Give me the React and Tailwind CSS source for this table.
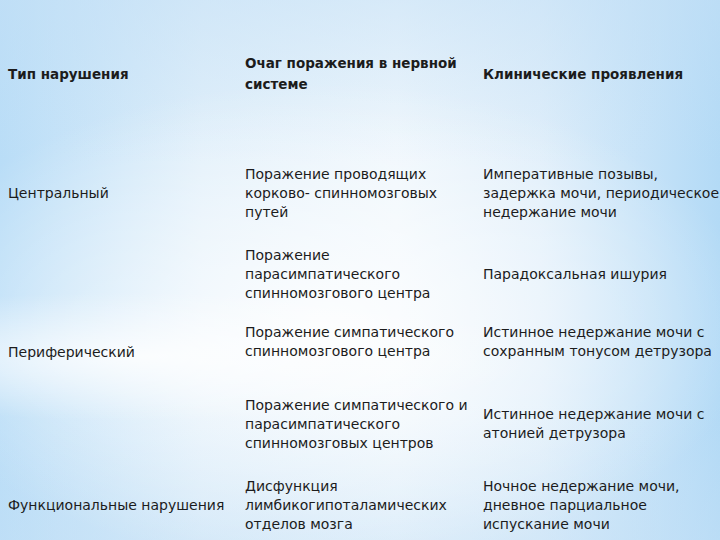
import React from "react";

// line breaks as on the slide
const focusLines = [
  ["Поражение проводящих", "корково- спинномозговых", "путей"],
  ["Поражение", "парасимпатического", "спинномозгового центра"],
  ["Поражение симпатического", "спинномозгового центра"],
  ["Поражение симпатического и", "парасимпатического", "спинномозговых центров"],
  ["Дисфункция", "лимбикогипоталамических", "отделов мозга"],
];

const signLines = [
  ["Императивные позывы,", "задержка мочи, периодическое", "недержание мочи"],
  ["Парадоксальная ишурия"],
  ["Истинное недержание мочи с", "сохранным тонусом детрузора"],
  ["Истинное недержание мочи с", "атонией детрузора"],
  ["Ночное недержание мочи,", "дневное парциальное", "испускание мочи"],
];

const Lines = ({ lines }) => (
  <div>
    {lines.map((l, i) => (
      <div key={i} className="whitespace-nowrap">
        {l}
      </div>
    ))}
  </div>
);

const Pair = ({ i }) => (
  <>
    <div className="flex items-center">
      <Lines lines={focusLines[i]} />
    </div>
    <div className="flex items-center">
      <Lines lines={signLines[i]} />
    </div>
  </>
);

export default function App() {
  return (
    <div
      className="relative w-[720px] h-[540px] overflow-hidden text-[#1c1c1c] bg-[radial-gradient(ellipse_55%_12%_at_20%_66%,rgba(255,255,255,0.8),rgba(255,255,255,0)_100%),radial-gradient(ellipse_60%_45%_at_45%_60%,rgba(255,255,255,0.85),rgba(255,255,255,0)_100%),linear-gradient(180deg,rgba(196,224,246,0.55)_0%,rgba(255,255,255,0)_30%,rgba(255,255,255,0)_75%,rgba(196,224,246,0.45)_100%),linear-gradient(90deg,#b9ddf7_0%,#e0effa_28%,#eef6fc_55%,#dfeefa_75%,#b3daf6_100%)]"
      style={{ fontFamily: '"DejaVu Sans", Verdana, sans-serif' }}
    >
      <div className="grid grid-cols-[245px_238px_1fr] grid-rows-[140px_98px_64px_72px_92px_70px] mt-[4px] text-[14px] leading-[19px]">
        {/* header */}
        <div className="pl-[8px] flex items-center font-bold text-[13.5px]">
          Тип нарушения
        </div>
        <div className="flex items-center font-bold text-[13.5px] leading-[21px]">
          <Lines lines={["Очаг поражения в нервной", "системе"]} />
        </div>
        <div className="flex items-center font-bold text-[13.5px]">
          Клинические проявления
        </div>

        <div className="pl-[8px] flex items-center">Центральный</div>
        <Pair i={0} />

        {/* spans three rows */}
        <div className="row-span-3 pl-[8px] pb-[8px] flex items-center">
          Периферический
        </div>
        <Pair i={1} />
        <Pair i={2} />
        <Pair i={3} />

        <div className="pl-[8px] flex items-center whitespace-nowrap">
          Функциональные нарушения
        </div>
        <Pair i={4} />
      </div>
    </div>
  );
}
